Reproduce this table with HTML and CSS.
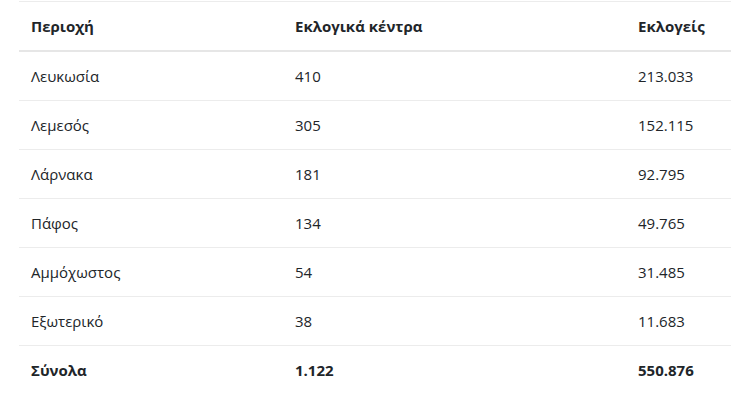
FILE: index.html
```html
<!DOCTYPE html>
<html lang="el">
<head>
<meta charset="utf-8">
<link rel="stylesheet" href="styles.css">
</head>
<body>
<div class="wrap">
<table class="results">
  <thead>
    <tr><th class="c1">Περιοχή</th><th class="c2">Εκλογικά κέντρα</th><th class="c3">Εκλογείς</th></tr>
  </thead>
  <tbody>
    <tr><td>Λευκωσία</td><td>410</td><td>213.033</td></tr>
    <tr><td>Λεμεσός</td><td>305</td><td>152.115</td></tr>
    <tr><td>Λάρνακα</td><td>181</td><td>92.795</td></tr>
    <tr><td>Πάφος</td><td>134</td><td>49.765</td></tr>
    <tr><td>Αμμόχωστος</td><td>54</td><td>31.485</td></tr>
    <tr><td>Εξωτερικό</td><td>38</td><td>11.683</td></tr>
    <tr class="total"><td>Σύνολα</td><td>1.122</td><td>550.876</td></tr>
  </tbody>
</table>
</div>
</body>
</html>
```
FILE: styles.css
```css
html, body {
  margin: 0;
  padding: 0;
  background: #ffffff;
}
body {
  font-family: "Open Sans", "Liberation Sans", sans-serif;
  font-size: 15px;
  color: #212529;
  overflow: hidden;
}
.wrap {
  padding: 1px 0 0 19px;
}
.results {
  border-collapse: collapse;
  width: 712px;
  table-layout: fixed;
}
.results th,
.results td {
  padding: 12px;
  line-height: 24px;
  text-align: left;
  vertical-align: top;
  border-top: 1px solid #ececec;
  white-space: nowrap;
}
.results th {
  font-weight: 700;
}
.results thead th {
  border-bottom: 2px solid #e6e6e6;
}
.c1 { width: 240px; }
.c2 { width: 319px; }
.c3 { width: 81px; }
.total td {
  font-weight: 700;
}
```
